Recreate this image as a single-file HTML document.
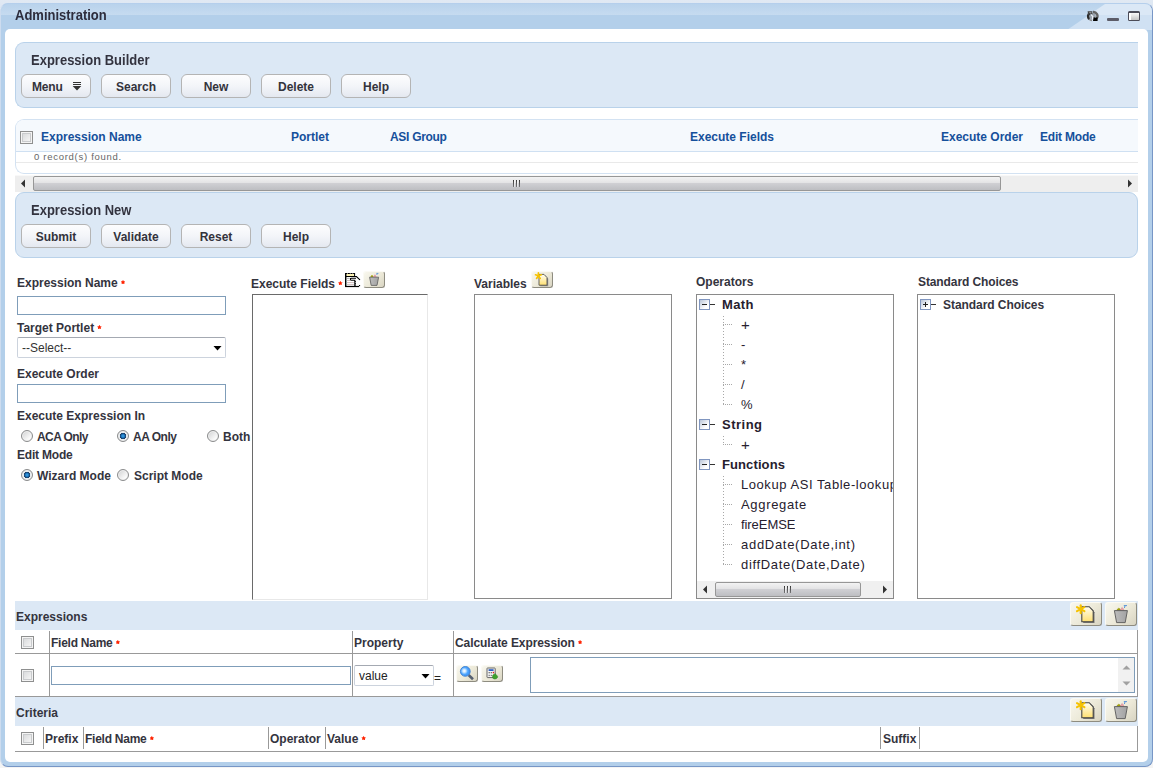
<!DOCTYPE html>
<html>
<head>
<meta charset="utf-8">
<title>Administration</title>
<style>
*{box-sizing:border-box;margin:0;padding:0}
html,body{width:1153px;height:768px;overflow:hidden}
body{background:#f4f4f4;font-family:"Liberation Sans",sans-serif;font-size:12px;color:#2a2a3a;position:relative}
.abs{position:absolute}
#topbg{left:0;top:0;width:1153px;height:8px;background:linear-gradient(#e1e9f3,#dde7f3)}
#frame{left:0;top:3px;width:1153px;height:764px;border-radius:8px;background:#b3cfea;border:1px solid;border-color:#b5cfec #7796c6 #7796c6 #cddcef;overflow:hidden}
#titlehi{left:0;top:0;width:1153px;height:11px;background:linear-gradient(#b9d3ec,#c6dbf0)}
#titlediag{left:1066px;top:0;width:90px;height:26px;background:linear-gradient(#dbe8f6 0 11px,#d0e1f3 11px);clip-path:polygon(38px 0,100% 0,100% 100%,0 100%)}
#rstrip{left:1147px;top:25px;width:5px;height:740px;background:#b8d3ee}
#title{left:14px;top:3.3px;font-size:13px;font-weight:bold;color:#2d2d3d;transform:scaleY(1.09);transform-origin:0 0}
#content{left:5px;top:29px;width:1143px;height:733px;background:#fff;border-radius:5px}
.panel{background:#dce8f5;border:1px solid #b9d2ea;border-right:none;border-radius:9px 0 0 9px}
.ptitle{font-size:13px;font-weight:bold;color:#33333f;transform:scaleY(1.07);transform-origin:0 0;white-space:nowrap}
.btn{height:24px;border:1px solid #b4b4b4;border-radius:6px;background:linear-gradient(#fdfdfe,#f3f5f9 50%,#e4e8f0);font-weight:bold;font-size:12px;color:#33333c;text-align:center;line-height:22px;padding-top:1px}
.lbl{font-weight:bold;font-size:12px;color:#34343e;white-space:nowrap}
.req{display:inline-block;width:4.6px;height:4.6px;background:#ff2200;clip-path:polygon(50% 0,66% 30%,100% 36%,76% 62%,84% 100%,50% 80%,16% 100%,24% 62%,0 36%,34% 30%);margin-left:3px;position:relative;top:-2.6px}
.th{font-weight:bold;font-size:12px;color:#15509b;white-space:nowrap}
.inp{background:#fff;border:1px solid #7f9db9}
.box{background:#fff;border:1px solid #8a8a8a}
.cb{width:13px;height:13px;border:1px solid #8e8f8f;background:linear-gradient(135deg,#d2d4d6,#f4f4f4 80%);box-shadow:inset 0 0 0 1px #f4f4f4,inset 0 0 0 2px #c9cbcd}
.radio{width:12px;height:12px;border-radius:50%;border:1px solid #8a8b8c;background:linear-gradient(135deg,#cfd0d1,#fbfbfb 75%);box-shadow:inset 0 0 0 1px #f0f0f0}
.radio.on{background:radial-gradient(circle at 50% 50%,#45a8e6 0,#1f7cc6 1.5px,#173a62 2.9px,#e6ebf0 3.5px,#d4d5d6 6px)}
.ex{width:11px;height:11px;border:1px solid #8096c0;background:linear-gradient(135deg,#b9c5d8,#fff 70%)}
.ex i{position:absolute;left:2px;top:4px;width:5px;height:1px;background:#222}
.ex b{position:absolute;left:4px;top:2px;width:1px;height:5px;background:#222}
.vd{width:1px;background:repeating-linear-gradient(#a8a8a8 0 1px,transparent 1px 3px)}
.hd{width:10px;height:1px;background:repeating-linear-gradient(90deg,#a8a8a8 0 1px,transparent 1px 2px)}
.ti{font-size:13.5px;letter-spacing:0.3px;line-height:17px}
.tree.tb{font-size:13px;line-height:17px}
.ib{border:1px solid;border-color:#fbfaf4 #8e8c80 #8e8c80 #fbfaf4;border-radius:3px;background:linear-gradient(135deg,#f8f7ee 0,#ece9d8 55%,#d8d4c2 100%);overflow:hidden}
.ib svg{position:absolute;left:-1px;top:-1px}
.tree{font-size:13px;color:#26202e;white-space:nowrap}
.tb{font-weight:bold}
</style>
</head>
<body>
<svg width="0" height="0" style="position:absolute">
 <defs>
  <linearGradient id="pg" x1="0" y1="0" x2="0" y2="1"><stop offset="0" stop-color="#fffef4"/><stop offset="1" stop-color="#ffe070"/></linearGradient>
  <linearGradient id="tg" x1="0" y1="0" x2="1" y2="0"><stop offset="0" stop-color="#bdbdbd"/><stop offset="1" stop-color="#a2a2a2"/></linearGradient>
  <radialGradient id="lg" cx="0.4" cy="0.45" r="0.6"><stop offset="0" stop-color="#fff"/><stop offset="0.25" stop-color="#cfe8ff"/><stop offset="0.6" stop-color="#4da6ff"/><stop offset="1" stop-color="#3a8df0"/></radialGradient>
  <symbol id="newL" viewBox="0 0 32 24">
    <path d="M12.3 5.2 H19.5 L23.6 9.4 V20.2 H12.3Z" fill="#777" transform="translate(0.9,0.9)"/>
    <path d="M11.8 4.7 H19.2 L23.2 8.8 V19.7 H11.8Z" fill="url(#pg)" stroke="#444" stroke-width="1.1"/>
    <g stroke="#f6c200" stroke-width="2.1" stroke-linecap="round"><path d="M10.7 3.2 V11.2"/><path d="M7 5.2 L14.4 9.2"/><path d="M14.4 5.2 L7 9.2"/></g>
  </symbol>
  <symbol id="newS" viewBox="0 0 22 17">
    <path d="M8.4 3.8 H13.2 L16.4 7 V14.6 H8.4Z" fill="#888" transform="translate(0.8,0.7)"/>
    <path d="M8 3.4 H13 L16 6.5 V14.2 H8Z" fill="url(#pg)" stroke="#555" stroke-width="0.9"/>
    <g stroke="#f6c200" stroke-width="1.7" stroke-linecap="round"><path d="M7.4 1.9 V4.8"/><path d="M7.4 4.8 L4.5 3.8"/><path d="M7.4 4.8 L10.3 3.8"/><path d="M7.4 4.8 L5.6 7.4"/><path d="M7.4 4.8 L9.2 7.4"/></g>
  </symbol>
  <symbol id="trashL" viewBox="0 0 32 24">
    <path d="M11.8 8.6 q0.4 -2 2 -2.4 q1.6 0.4 2 2.4Z" fill="#a4a408" stroke="#8c8c00" stroke-width="0.5"/>
    <path d="M15.2 8.4 q0.6 -2.2 2 -3 q1.2 1 1.8 3Z" fill="#e6a0a8" stroke="#d08890" stroke-width="0.5"/>
    <path d="M18.8 3.6 H22 M20 3.8 L19.4 6" stroke="#4a8ad8" stroke-width="0.9" fill="none"/>
    <path d="M9.4 8.6 H22.4 L20.2 20.6 H11.6Z" fill="url(#tg)" stroke="#5e5e5e" stroke-width="0.95" stroke-linejoin="round"/>
  </symbol>
  <symbol id="trashS" viewBox="0 0 22 17">
    <path d="M7.4 6.2 q0.3 -1.8 1.6 -2.2 q1.3 0.4 1.6 2.2Z" fill="#a4a408"/>
    <path d="M10.4 6 q0.5 -2 1.6 -2.8 q1 1 1.5 2.8Z" fill="#e6a0a8"/>
    <path d="M13.4 2.4 H15.4 M14.2 2.6 L13.8 4" stroke="#4a8ad8" stroke-width="0.8" fill="none"/>
    <path d="M6.6 6.2 H15.6 L14 14.4 H8.2Z" fill="url(#tg)" stroke="#666" stroke-width="0.9" stroke-linejoin="round"/>
  </symbol>
  <symbol id="searchS" viewBox="0 0 22 17">
    <path d="M12.6 10 L17 14.2" stroke="#566070" stroke-width="2.6" stroke-linecap="butt"/>
    <circle cx="9.3" cy="6.4" r="4.9" fill="url(#lg)" stroke="#3d7fd0" stroke-width="0.9"/>
  </symbol>
  <symbol id="calcS" viewBox="0 0 22 17">
    <rect x="6" y="3" width="8.2" height="9.6" rx="0.6" fill="#f4f4f4" stroke="#666" stroke-width="1"/>
    <rect x="7.6" y="4.2" width="5" height="1.8" fill="#2f60c4"/>
    <rect x="7.6" y="7" width="1.2" height="1.3" fill="#666"/><rect x="9.7" y="7" width="1.2" height="1.3" fill="#666"/><rect x="11.7" y="6.8" width="1.4" height="1.5" fill="#e02020"/>
    <rect x="7.6" y="9.8" width="1.2" height="1.3" fill="#777"/><rect x="9.7" y="9.8" width="1.2" height="1.3" fill="#777"/>
    <path d="M11.6 10.6 q0.4 -1.6 2 -1 l0.4 -1 l2.6 2.6 q0.4 1.6 -1.4 2.6 q-2.4 0.8 -3.6 -0.8Z" fill="#3ea02c" stroke="#2c8820" stroke-width="0.5"/>
  </symbol>
 </defs>
</svg>

<div id="topbg" class="abs"></div>
<div id="frame" class="abs">
  <div id="titlehi" class="abs"></div>
  <div id="titlediag" class="abs"></div>
  <div id="title" class="abs">Administration</div>
  <svg class="abs" style="left:1084px;top:5px" width="14" height="13" viewBox="0 0 14 13">
    <circle cx="7.6" cy="7.2" r="3.2" fill="#9aa3ad"/>
    <path d="M4.2 10.2 A4.1 4.1 0 0 1 4.8 4" fill="none" stroke="#2c2c2c" stroke-width="2.4"/>
    <path d="M8 3 A4.1 4.1 0 0 1 11.6 9.6" fill="none" stroke="#646464" stroke-width="2.4"/>
    <path d="M4.2 10.2 A4.1 4.1 0 0 0 7 11.4" fill="none" stroke="#8a8a8a" stroke-width="1.6"/>
    <path d="M2.6 2.2 H7.4 V5.4 L5.6 4.6 L3.2 6Z" fill="#444"/>
    <path d="M4.2 3 H6.4 V4 H4.2Z" fill="#8c8c8c"/>
    <path d="M8.6 8 L10.2 8.8 L12.6 8.2 V12 H8 Z" fill="#050505"/>
    <path d="M6.2 5.6 L7.8 7.6 L7.4 10.4" fill="none" stroke="#eef3fa" stroke-width="1.2"/>
  </svg>
  <div class="abs" style="left:1106px;top:14px;width:12px;height:3px;background:#5c5c68;border-radius:1px"></div>
  <div class="abs" style="left:1127px;top:7px;width:12px;height:10px;border:1px solid #4c4c58;border-top-width:2px;border-radius:1.5px;background:linear-gradient(90deg,#fff 0 2px,transparent 2px),linear-gradient(#fafafa,#c4c4c4)"></div>
</div>
<div id="content" class="abs"></div>

<!-- Expression Builder panel -->
<div class="abs panel" style="left:15px;top:42px;width:1123px;height:66px"></div>
<div class="abs ptitle" style="left:31px;top:52.2px">Expression Builder</div>
<div class="abs btn" style="left:21px;top:74px;width:70px;text-align:left;padding-left:10px;letter-spacing:-0.2px">Menu</div>
<svg class="abs" style="left:72px;top:81px" width="10" height="10"><path d="M1 1.5H9M1 3.5H9" stroke="#333" stroke-width="1"/><path d="M0.7 5 H9.3 L5 9.5Z" fill="#333"/></svg>
<div class="abs btn" style="left:101px;top:74px;width:70px">Search</div>
<div class="abs btn" style="left:181px;top:74px;width:70px">New</div>
<div class="abs btn" style="left:261px;top:74px;width:70px">Delete</div>
<div class="abs btn" style="left:341px;top:74px;width:70px">Help</div>

<!-- Result table panel -->
<div class="abs" style="left:15px;top:119px;width:1123px;height:55px;background:#fff;border:1px solid #d3e2f2;border-right:none;border-radius:9px 0 0 9px;overflow:hidden">
  <div class="abs" style="left:0;top:0;width:1123px;height:32px;background:#f5f9fd;border-bottom:1px solid #cfe0f2"></div>
  <div class="abs" style="left:0;top:42px;width:1123px;height:1px;background:#e9e9e9"></div>
</div>
<div class="abs cb" style="left:20px;top:131px"></div>
<div class="abs th" style="left:41px;top:130px">Expression Name</div>
<div class="abs th" style="left:291px;top:130px">Portlet</div>
<div class="abs th" style="left:390px;top:130px;letter-spacing:-0.3px">ASI Group</div>
<div class="abs th" style="left:690px;top:130px">Execute Fields</div>
<div class="abs th" style="left:941px;top:130px">Execute Order</div>
<div class="abs th" style="left:1040px;top:130px;letter-spacing:-0.2px">Edit Mode</div>
<div class="abs" style="left:35px;top:151px;font-size:9.5px;color:#666;letter-spacing:0.72px;left:34px">0 record(s) found.</div>

<!-- horizontal scrollbar -->
<div class="abs" style="left:15px;top:175px;width:1123px;height:17px;background:linear-gradient(#f8f8f8 0 1px,#eeeeee 1px)"></div>
<div class="abs" style="left:33px;top:176px;width:968px;height:15px;border:1px solid #979797;border-radius:2px;background:linear-gradient(#f3f3f3,#e3e3e5 45%,#cfcfd3 50%,#bdbec2)"></div>
<svg class="abs" style="left:20px;top:179px" width="6" height="9"><path d="M5 0.5 L1 4.5 L5 8.5Z" fill="#333"/></svg>
<svg class="abs" style="left:1127px;top:179px" width="6" height="9"><path d="M1 0.5 L5 4.5 L1 8.5Z" fill="#333"/></svg>
<div class="abs" style="left:513px;top:180px;width:7px;height:7px;background:linear-gradient(90deg,#333 0 1px,#f4f4f4 1px 2px,transparent 2px 3px,#333 3px 4px,#f4f4f4 4px 5px,transparent 5px 6px,#333 6px 7px);-webkit-mask:linear-gradient(#000,rgba(0,0,0,.55));mask:linear-gradient(#000,rgba(0,0,0,.55))"></div>

<!-- Expression New panel -->
<div class="abs panel" style="left:15px;top:192px;width:1123px;height:66px;border-right:1px solid #b9d2ea;border-radius:9px"></div>
<div class="abs ptitle" style="left:31px;top:202.2px">Expression New</div>
<div class="abs btn" style="left:21px;top:224px;width:70px">Submit</div>
<div class="abs btn" style="left:101px;top:224px;width:70px">Validate</div>
<div class="abs btn" style="left:181px;top:224px;width:70px">Reset</div>
<div class="abs btn" style="left:261px;top:224px;width:70px">Help</div>

<!-- Left form -->
<div class="abs lbl" style="left:17px;top:276px">Expression Name<span class="req"></span></div>
<div class="abs inp" style="left:17px;top:296px;width:209px;height:19px"></div>
<div class="abs lbl" style="left:17px;top:321px">Target Portlet<span class="req"></span></div>
<div class="abs" style="left:17px;top:337px;width:209px;height:21px;background:#fff;border:1px solid #ccd3dd;border-top-color:#a4a9b2;border-radius:2px;font-size:12px;line-height:19px;padding:1px 0 0 4px;color:#333">--Select--</div>
<svg class="abs" style="left:213px;top:346px" width="9" height="5"><path d="M0.5 0 H8.5 L4.5 4.5Z" fill="#000"/></svg>
<div class="abs lbl" style="left:17px;top:367px">Execute Order</div>
<div class="abs inp" style="left:17px;top:384px;width:209px;height:19px"></div>
<div class="abs lbl" style="left:17px;top:409px">Execute Expression In</div>
<div class="abs radio" style="left:21px;top:430px"></div><div class="abs lbl" style="left:37px;top:430px;letter-spacing:-0.6px">ACA Only</div>
<div class="abs radio on" style="left:117px;top:430px"></div><div class="abs lbl" style="left:133px;top:430px;letter-spacing:-0.5px">AA Only</div>
<div class="abs radio" style="left:207px;top:430px"></div><div class="abs lbl" style="left:223px;top:430px">Both</div>
<div class="abs lbl" style="left:17px;top:448px;letter-spacing:-0.2px">Edit Mode</div>
<div class="abs radio on" style="left:21px;top:469px"></div><div class="abs lbl" style="left:37px;top:469px">Wizard Mode</div>
<div class="abs radio" style="left:117px;top:469px"></div><div class="abs lbl" style="left:134px;top:469px">Script Mode</div>

<!-- Execute Fields -->
<div class="abs lbl" style="left:251px;top:277px">Execute Fields<span class="req"></span></div>
<div class="abs" style="left:252px;top:294px;width:176px;height:306px;background:#fff;border:1px solid;border-color:#6a6a6a #e8e8e8 #e8e8e8 #6a6a6a"></div>

<!-- Variables -->
<div class="abs lbl" style="left:474px;top:277px">Variables</div>
<div class="abs box" style="left:474px;top:294px;width:198px;height:305px"></div>

<!-- Operators -->
<div class="abs lbl" style="left:696px;top:275px">Operators</div>
<div class="abs box" style="left:696px;top:294px;width:198px;height:305px"></div>

<!-- Standard Choices -->
<div class="abs lbl" style="left:918px;top:275px;letter-spacing:-0.1px">Standard Choices</div>
<div class="abs box" style="left:917px;top:294px;width:198px;height:305px"></div>

<!-- trees -->
<div class="abs ex" style="left:699px;top:299px"><i></i></div><div class="abs" style="left:710px;top:304px;width:5px;height:1px;background:#333"></div>
<div class="abs tree tb" style="left:722px;top:296px;letter-spacing:0.4px">Math</div>
<div class="abs vd" style="left:723px;top:316px;height:89px"></div>
<div class="abs hd" style="left:723px;top:324px"></div>
<div class="abs tree ti" style="left:741px;top:315.5px;font-size:15px">+</div>
<div class="abs hd" style="left:723px;top:344px"></div>
<div class="abs tree ti" style="left:741px;top:336px">-</div>
<div class="abs hd" style="left:723px;top:364px"></div>
<div class="abs tree ti" style="left:741px;top:356px">*</div>
<div class="abs hd" style="left:723px;top:384px"></div>
<div class="abs tree ti" style="left:741px;top:376px">/</div>
<div class="abs hd" style="left:723px;top:404px"></div>
<div class="abs tree ti" style="left:741px;top:396px">%</div>
<div class="abs ex" style="left:699px;top:419px"><i></i></div><div class="abs" style="left:710px;top:424px;width:5px;height:1px;background:#333"></div>
<div class="abs tree tb" style="left:722px;top:416px;letter-spacing:0.5px">String</div>
<div class="abs vd" style="left:723px;top:436px;height:9px"></div>
<div class="abs hd" style="left:723px;top:444px"></div>
<div class="abs tree ti" style="left:741px;top:435.5px;font-size:15px">+</div>
<div class="abs ex" style="left:699px;top:459px"><i></i></div><div class="abs" style="left:710px;top:464px;width:5px;height:1px;background:#333"></div>
<div class="abs tree tb" style="left:722px;top:456px;letter-spacing:0.1px">Functions</div>
<div class="abs vd" style="left:723px;top:476px;height:89px"></div>
<div class="abs hd" style="left:723px;top:484px"></div>
<div class="abs tree ti" style="left:741px;top:476px;max-width:152px;overflow:hidden;letter-spacing:0.56px">Lookup ASI Table-lookup</div>
<div class="abs hd" style="left:723px;top:504px"></div>
<div class="abs tree ti" style="left:741px;top:496px;max-width:152px;overflow:hidden;letter-spacing:0.67px">Aggregate</div>
<div class="abs hd" style="left:723px;top:524px"></div>
<div class="abs tree ti" style="left:741px;top:516px;max-width:152px;overflow:hidden;letter-spacing:-0.07px">fireEMSE</div>
<div class="abs hd" style="left:723px;top:544px"></div>
<div class="abs tree ti" style="left:741px;top:536px;max-width:152px;overflow:hidden;letter-spacing:0.71px">addDate(Date,int)</div>
<div class="abs hd" style="left:723px;top:564px"></div>
<div class="abs tree ti" style="left:741px;top:556px;max-width:152px;overflow:hidden;letter-spacing:0.67px">diffDate(Date,Date)</div>
<div class="abs" style="left:697px;top:581px;width:196px;height:17px;background:#f0f0f0"></div>
<div class="abs" style="left:715px;top:582px;width:146px;height:15px;border:1px solid #979797;border-radius:2px;background:linear-gradient(#f3f3f3,#e3e3e5 45%,#cfcfd3 50%,#bdbec2)"></div>
<svg class="abs" style="left:702px;top:585px" width="6" height="9"><path d="M5 0.5 L1 4.5 L5 8.5Z" fill="#333"/></svg>
<svg class="abs" style="left:882px;top:585px" width="6" height="9"><path d="M1 0.5 L5 4.5 L1 8.5Z" fill="#333"/></svg>
<div class="abs" style="left:784px;top:586px;width:7px;height:7px;background:linear-gradient(90deg,#333 0 1px,#f4f4f4 1px 2px,transparent 2px 3px,#333 3px 4px,#f4f4f4 4px 5px,transparent 5px 6px,#333 6px 7px);-webkit-mask:linear-gradient(#000,rgba(0,0,0,.55));mask:linear-gradient(#000,rgba(0,0,0,.55))"></div>
<div class="abs ex" style="left:920px;top:299px"><i></i><b></b></div><div class="abs" style="left:931px;top:304px;width:5px;height:1px;background:#333"></div>
<div class="abs lbl" style="left:943px;top:298px;letter-spacing:-0.06px">Standard Choices</div>

<!-- Expressions -->
<div class="abs" style="left:15px;top:601px;width:1123px;height:29px;background:#dce8f5"></div>
<div class="abs lbl" style="left:16px;top:610px">Expressions</div>
<div class="abs" style="left:15px;top:630px;width:1123px;height:67px;background:#fff;border-right:1px solid #999;border-bottom:1px solid #999"></div>
<div class="abs" style="left:15px;top:653px;width:1123px;height:1px;background:#999"></div>
<div class="abs" style="left:49px;top:631px;width:1px;height:65px;background:#999"></div>
<div class="abs" style="left:352px;top:631px;width:1px;height:65px;background:#999"></div>
<div class="abs" style="left:453px;top:631px;width:1px;height:65px;background:#999"></div>
<div class="abs cb" style="left:21px;top:636px"></div>
<div class="abs cb" style="left:21px;top:669px"></div>
<div class="abs lbl" style="left:51px;top:636px;letter-spacing:-0.25px">Field Name<span class="req"></span></div>
<div class="abs lbl" style="left:354px;top:636px">Property</div>
<div class="abs lbl" style="left:455px;top:636px;letter-spacing:-0.08px">Calculate Expression<span class="req"></span></div>
<div class="abs inp" style="left:51px;top:666px;width:300px;height:19px"></div>
<div class="abs" style="left:354px;top:665px;width:80px;height:21px;background:#fff;border:1px solid #ccd3dd;border-top-color:#a4a9b2;border-radius:2px;font-size:12px;line-height:19px;padding:1px 0 0 4px;color:#222">value</div>
<svg class="abs" style="left:421px;top:674px" width="9" height="5"><path d="M0.5 0 H8.5 L4.5 4.5Z" fill="#000"/></svg>
<div class="abs" style="left:434px;top:671px;font-size:12px;color:#222">=</div>
<div class="abs inp" style="left:530px;top:657px;width:605px;height:36px"></div>
<div class="abs" style="left:1118px;top:658px;width:16px;height:34px;background:#f1f1f1"></div>
<svg class="abs" style="left:1122px;top:665px" width="9" height="5"><path d="M0.5 4.5 L4.5 0.5 L8.5 4.5Z" fill="#a0a0a0"/></svg>
<svg class="abs" style="left:1122px;top:681px" width="9" height="5"><path d="M0.5 0.5 L4.5 4.5 L8.5 0.5Z" fill="#a0a0a0"/></svg>

<!-- Criteria -->
<div class="abs" style="left:15px;top:697px;width:1123px;height:29px;background:#dce8f5"></div>
<div class="abs lbl" style="left:16px;top:706px">Criteria</div>
<div class="abs" style="left:15px;top:726px;width:1123px;height:26px;background:#fff;border-right:1px solid #999;border-bottom:1px solid #999"></div>
<div class="abs" style="left:43px;top:727px;width:1px;height:22px;background:#999"></div>
<div class="abs" style="left:83px;top:727px;width:1px;height:22px;background:#999"></div>
<div class="abs" style="left:268px;top:727px;width:1px;height:22px;background:#999"></div>
<div class="abs" style="left:325px;top:727px;width:1px;height:22px;background:#999"></div>
<div class="abs" style="left:880px;top:727px;width:1px;height:22px;background:#999"></div>
<div class="abs" style="left:919px;top:727px;width:1px;height:22px;background:#999"></div>
<div class="abs cb" style="left:21px;top:732px"></div>
<div class="abs lbl" style="left:45px;top:732px">Prefix</div>
<div class="abs lbl" style="left:85px;top:732px;letter-spacing:-0.25px">Field Name<span class="req"></span></div>
<div class="abs lbl" style="left:270px;top:732px">Operator</div>
<div class="abs lbl" style="left:327px;top:732px">Value<span class="req"></span></div>
<div class="abs lbl" style="left:883px;top:732px">Suffix</div>

<!-- icons -->
<div class="abs ib" style="left:1070px;top:602px;width:32px;height:24px"><svg width="32" height="24"><use href="#newL"/></svg></div>
<div class="abs ib" style="left:1105px;top:602px;width:32px;height:24px"><svg width="32" height="24"><use href="#trashL"/></svg></div>
<div class="abs ib" style="left:1070px;top:698px;width:32px;height:24px"><svg width="32" height="24"><use href="#newL"/></svg></div>
<div class="abs ib" style="left:1105px;top:698px;width:32px;height:24px"><svg width="32" height="24"><use href="#trashL"/></svg></div>
<div class="abs ib" style="left:363px;top:271px;width:22px;height:17px"><svg width="22" height="17"><use href="#trashS"/></svg></div>
<div class="abs ib" style="left:531px;top:271px;width:22px;height:17px"><svg width="22" height="17"><use href="#newS"/></svg></div>
<div class="abs ib" style="left:456px;top:665px;width:22px;height:17px"><svg width="22" height="17"><use href="#searchS"/></svg></div>
<div class="abs ib" style="left:481px;top:665px;width:22px;height:17px"><svg width="22" height="17"><use href="#calcS"/></svg></div>
<svg class="abs" style="left:345px;top:273px" width="16" height="15" viewBox="0 0 16 15">
  <rect x="0.6" y="0.5" width="9" height="13" fill="#fff"/>
  <rect x="1.4" y="1" width="8.2" height="2.1" fill="#fdf3b4"/>
  <path d="M0 0.5 H10" stroke="#000" stroke-width="1.1" stroke-dasharray="2.2 0.5"/>
  <path d="M0.7 0 V14" stroke="#000" stroke-width="1.5"/>
  <path d="M9.6 0 V3.4" stroke="#000" stroke-width="1"/>
  <path d="M0 3.5 H11.4 L14.4 6.4" fill="none" stroke="#000" stroke-width="1.1"/>
  <path d="M1.8 5.4 H4.6" stroke="#9a9a9a" stroke-width="0.8"/>
  <path d="M1.6 7.5 H5.2 M1.6 9.6 H9 M1.6 11.6 H9" stroke="#6cc" stroke-width="0.9" stroke-dasharray="1 1"/>
  <path d="M2.6 7.5 H5.2 M2.6 9.6 H9 M2.6 11.6 H9" stroke="#e88" stroke-width="0.9" stroke-dasharray="1 1"/>
  <path d="M11 5.2 H6.6 Q5.3 5.2 5.4 6.3 Q5.5 7.4 6.8 7.3 H9.8 V13.4" fill="#fff" stroke="#000" stroke-width="1.1"/>
  <path d="M10 8.6 H11 M10 10.4 H11 M10 12 H11" stroke="#000" stroke-width="0.9"/>
  <path d="M0 13.5 H14" stroke="#000" stroke-width="1.2"/>
  <rect x="14" y="6" width="1.1" height="1.1" fill="#000"/><rect x="14" y="12" width="1.1" height="1.2" fill="#000"/>
 </svg>
</body>
</html>
